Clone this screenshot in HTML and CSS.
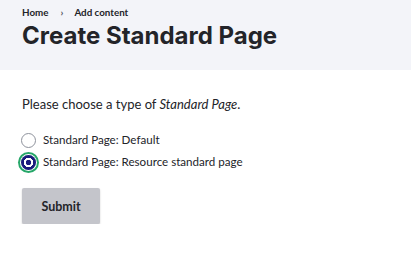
FILE: index.html
```html
<!DOCTYPE html>
<html>
<head>
<meta charset="utf-8">
<link rel="stylesheet" href="styles.css">
</head>
<body>
<header class="page-header">
  <nav class="breadcrumb">
    <a href="#">Home</a>
    <span class="sep">›</span>
    <a href="#">Add content</a>
  </nav>
  <h1 class="title">Create Standard Page</h1>
</header>
<main class="content">
  <p class="intro">Please choose a type of <em>Standard Page</em>.</p>
  <div class="radios">
    <label class="radio"><span class="dot"></span>Standard Page: Default</label>
    <label class="radio checked"><span class="dot"></span>Standard Page: Resource standard page</label>
  </div>
  <button class="submit">Submit</button>
</main>
</body>
</html>
```
FILE: styles.css
```css
html, body { margin: 0; padding: 0; background: #fff; }
body { font-family: Lato, "Liberation Sans", sans-serif; color: #232429; }
.page-header { background: #f3f4f9; padding: 6px 22px 22px; height: 42px; }
.breadcrumb { display: flex; align-items: center; font-size: 9.8px; font-weight: 700; line-height: 12px; }
.breadcrumb a { color: #232429; text-decoration: none; }
.breadcrumb .sep { margin: 0 11px 0 12px; color: #545560; font-size: 10px; }
.title { margin: 3px 0 0; font-family: Inter, "Liberation Sans", sans-serif; font-size: 24px; font-weight: 700; line-height: 30px; }
.content { padding: 26px 22px 0; }
.intro { margin: 0; font-size: 13px; line-height: 16px; }
.radios { margin-top: 20px; display: flex; flex-direction: column; gap: 6px; }
.radio { display: flex; align-items: center; font-size: 11.6px; line-height: 16px; height: 16px; }
.dot { width: 15px; height: 15px; border: 1.5px solid #8e929c; border-radius: 50%; margin-right: 7px; margin-left: -1px; box-sizing: border-box; background: #fff; flex: none; }
.checked .dot { border: none; background: radial-gradient(circle, #1b1b7d 0 2.5px, #fff 3px 4.5px, #1b1b7d 5px); box-shadow: 0 0 0 1px #fff, 0 0 0 3px #26a769; }
.submit { margin-top: 18px; font-family: inherit; font-size: 12.5px; font-weight: 700; color: #232429; background: #c4c5cb; border: none; border-radius: 2px; width: 78px; height: 36px; box-shadow: 0 1px 2px rgba(0,0,0,0.2); }
```
